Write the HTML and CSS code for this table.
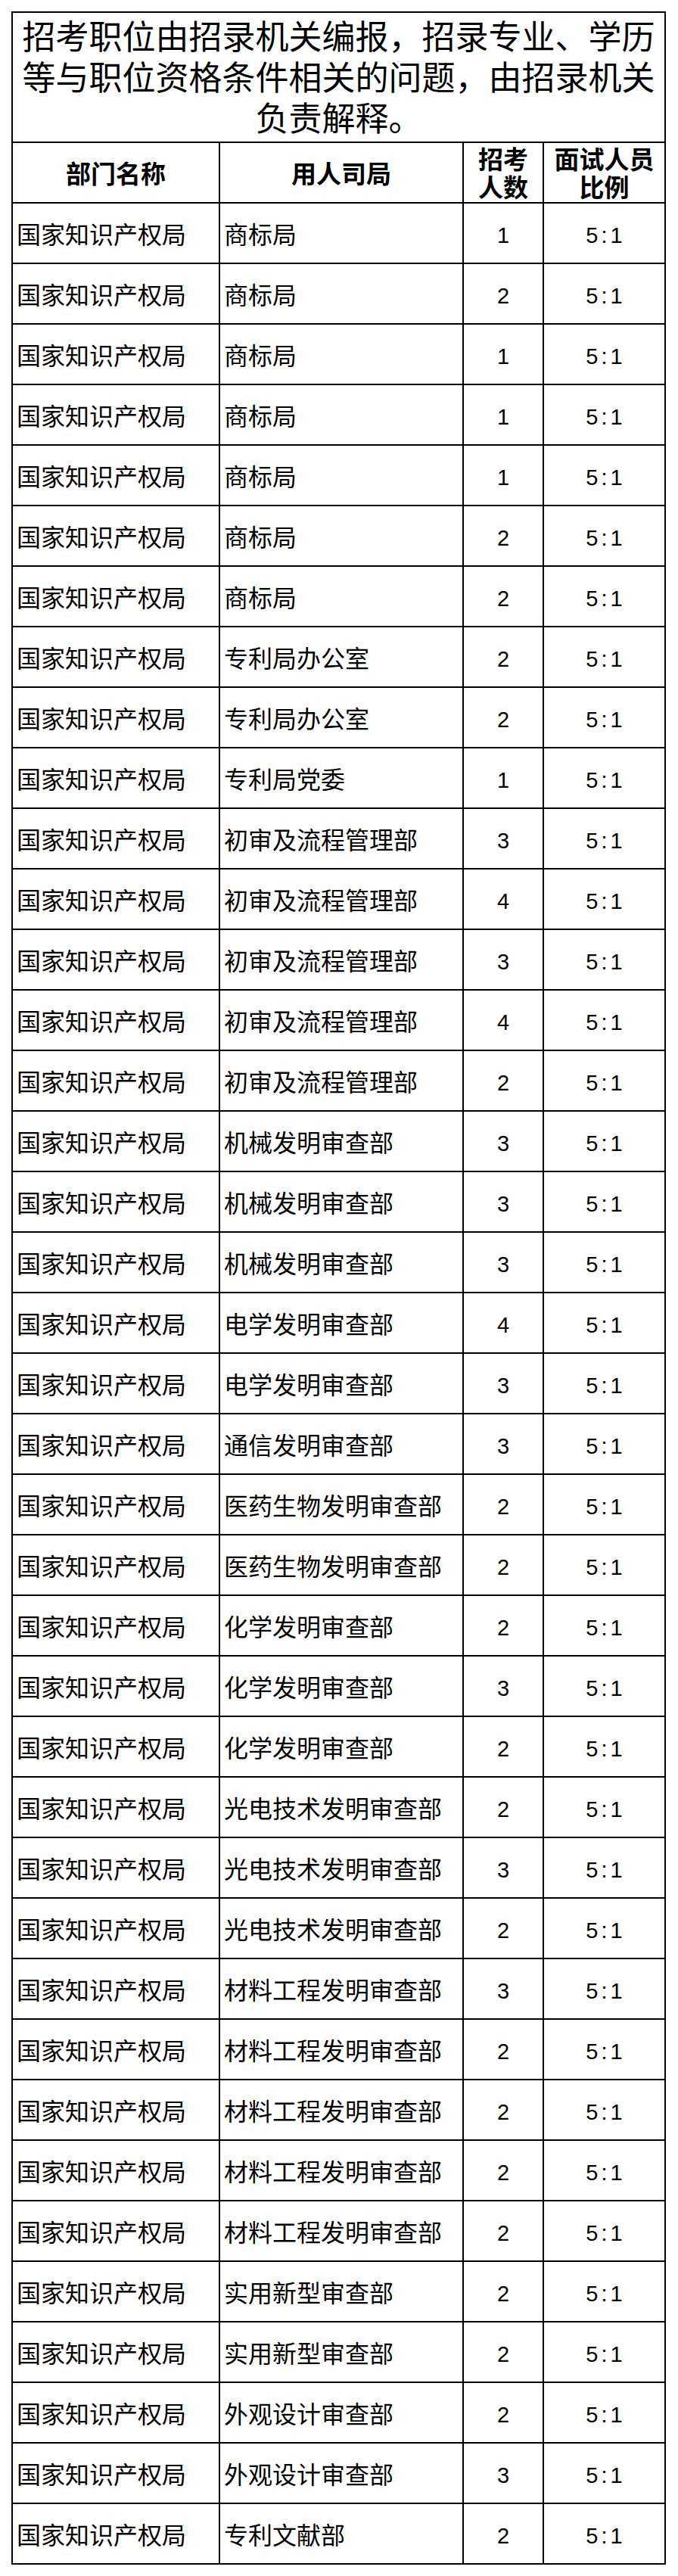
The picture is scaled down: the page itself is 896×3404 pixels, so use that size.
FILE: index.html
```html
<!DOCTYPE html>
<html lang="zh-CN">
<head>
<meta charset="utf-8">
<title>招考职位表</title>
<link rel="stylesheet" href="styles.css">
</head>
<body>
<div class="sheet">
  <div class="title">招考职位由招录机关编报，招录专业、学历等与职位资格条件相关的问题，由招录机关负责解释。</div>
  <div class="row head">
    <div class="cell c">部门名称</div>
    <div class="cell c">用人司局</div>
    <div class="cell c two">招考<br>人数</div>
    <div class="cell c two">面试人员<br>比例</div>
  </div>
  <div class="row"><div class="cell">国家知识产权局</div><div class="cell">商标局</div><div class="cell c num">1</div><div class="cell c num"><span class="ratio">5:1</span></div></div>
  <div class="row"><div class="cell">国家知识产权局</div><div class="cell">商标局</div><div class="cell c num">2</div><div class="cell c num"><span class="ratio">5:1</span></div></div>
  <div class="row"><div class="cell">国家知识产权局</div><div class="cell">商标局</div><div class="cell c num">1</div><div class="cell c num"><span class="ratio">5:1</span></div></div>
  <div class="row"><div class="cell">国家知识产权局</div><div class="cell">商标局</div><div class="cell c num">1</div><div class="cell c num"><span class="ratio">5:1</span></div></div>
  <div class="row"><div class="cell">国家知识产权局</div><div class="cell">商标局</div><div class="cell c num">1</div><div class="cell c num"><span class="ratio">5:1</span></div></div>
  <div class="row"><div class="cell">国家知识产权局</div><div class="cell">商标局</div><div class="cell c num">2</div><div class="cell c num"><span class="ratio">5:1</span></div></div>
  <div class="row"><div class="cell">国家知识产权局</div><div class="cell">商标局</div><div class="cell c num">2</div><div class="cell c num"><span class="ratio">5:1</span></div></div>
  <div class="row"><div class="cell">国家知识产权局</div><div class="cell">专利局办公室</div><div class="cell c num">2</div><div class="cell c num"><span class="ratio">5:1</span></div></div>
  <div class="row"><div class="cell">国家知识产权局</div><div class="cell">专利局办公室</div><div class="cell c num">2</div><div class="cell c num"><span class="ratio">5:1</span></div></div>
  <div class="row"><div class="cell">国家知识产权局</div><div class="cell">专利局党委</div><div class="cell c num">1</div><div class="cell c num"><span class="ratio">5:1</span></div></div>
  <div class="row"><div class="cell">国家知识产权局</div><div class="cell">初审及流程管理部</div><div class="cell c num">3</div><div class="cell c num"><span class="ratio">5:1</span></div></div>
  <div class="row"><div class="cell">国家知识产权局</div><div class="cell">初审及流程管理部</div><div class="cell c num">4</div><div class="cell c num"><span class="ratio">5:1</span></div></div>
  <div class="row"><div class="cell">国家知识产权局</div><div class="cell">初审及流程管理部</div><div class="cell c num">3</div><div class="cell c num"><span class="ratio">5:1</span></div></div>
  <div class="row"><div class="cell">国家知识产权局</div><div class="cell">初审及流程管理部</div><div class="cell c num">4</div><div class="cell c num"><span class="ratio">5:1</span></div></div>
  <div class="row"><div class="cell">国家知识产权局</div><div class="cell">初审及流程管理部</div><div class="cell c num">2</div><div class="cell c num"><span class="ratio">5:1</span></div></div>
  <div class="row"><div class="cell">国家知识产权局</div><div class="cell">机械发明审查部</div><div class="cell c num">3</div><div class="cell c num"><span class="ratio">5:1</span></div></div>
  <div class="row"><div class="cell">国家知识产权局</div><div class="cell">机械发明审查部</div><div class="cell c num">3</div><div class="cell c num"><span class="ratio">5:1</span></div></div>
  <div class="row"><div class="cell">国家知识产权局</div><div class="cell">机械发明审查部</div><div class="cell c num">3</div><div class="cell c num"><span class="ratio">5:1</span></div></div>
  <div class="row"><div class="cell">国家知识产权局</div><div class="cell">电学发明审查部</div><div class="cell c num">4</div><div class="cell c num"><span class="ratio">5:1</span></div></div>
  <div class="row"><div class="cell">国家知识产权局</div><div class="cell">电学发明审查部</div><div class="cell c num">3</div><div class="cell c num"><span class="ratio">5:1</span></div></div>
  <div class="row"><div class="cell">国家知识产权局</div><div class="cell">通信发明审查部</div><div class="cell c num">3</div><div class="cell c num"><span class="ratio">5:1</span></div></div>
  <div class="row"><div class="cell">国家知识产权局</div><div class="cell">医药生物发明审查部</div><div class="cell c num">2</div><div class="cell c num"><span class="ratio">5:1</span></div></div>
  <div class="row"><div class="cell">国家知识产权局</div><div class="cell">医药生物发明审查部</div><div class="cell c num">2</div><div class="cell c num"><span class="ratio">5:1</span></div></div>
  <div class="row"><div class="cell">国家知识产权局</div><div class="cell">化学发明审查部</div><div class="cell c num">2</div><div class="cell c num"><span class="ratio">5:1</span></div></div>
  <div class="row"><div class="cell">国家知识产权局</div><div class="cell">化学发明审查部</div><div class="cell c num">3</div><div class="cell c num"><span class="ratio">5:1</span></div></div>
  <div class="row"><div class="cell">国家知识产权局</div><div class="cell">化学发明审查部</div><div class="cell c num">2</div><div class="cell c num"><span class="ratio">5:1</span></div></div>
  <div class="row"><div class="cell">国家知识产权局</div><div class="cell">光电技术发明审查部</div><div class="cell c num">2</div><div class="cell c num"><span class="ratio">5:1</span></div></div>
  <div class="row"><div class="cell">国家知识产权局</div><div class="cell">光电技术发明审查部</div><div class="cell c num">3</div><div class="cell c num"><span class="ratio">5:1</span></div></div>
  <div class="row"><div class="cell">国家知识产权局</div><div class="cell">光电技术发明审查部</div><div class="cell c num">2</div><div class="cell c num"><span class="ratio">5:1</span></div></div>
  <div class="row"><div class="cell">国家知识产权局</div><div class="cell">材料工程发明审查部</div><div class="cell c num">3</div><div class="cell c num"><span class="ratio">5:1</span></div></div>
  <div class="row"><div class="cell">国家知识产权局</div><div class="cell">材料工程发明审查部</div><div class="cell c num">2</div><div class="cell c num"><span class="ratio">5:1</span></div></div>
  <div class="row"><div class="cell">国家知识产权局</div><div class="cell">材料工程发明审查部</div><div class="cell c num">2</div><div class="cell c num"><span class="ratio">5:1</span></div></div>
  <div class="row"><div class="cell">国家知识产权局</div><div class="cell">材料工程发明审查部</div><div class="cell c num">2</div><div class="cell c num"><span class="ratio">5:1</span></div></div>
  <div class="row"><div class="cell">国家知识产权局</div><div class="cell">材料工程发明审查部</div><div class="cell c num">2</div><div class="cell c num"><span class="ratio">5:1</span></div></div>
  <div class="row"><div class="cell">国家知识产权局</div><div class="cell">实用新型审查部</div><div class="cell c num">2</div><div class="cell c num"><span class="ratio">5:1</span></div></div>
  <div class="row"><div class="cell">国家知识产权局</div><div class="cell">实用新型审查部</div><div class="cell c num">2</div><div class="cell c num"><span class="ratio">5:1</span></div></div>
  <div class="row"><div class="cell">国家知识产权局</div><div class="cell">外观设计审查部</div><div class="cell c num">2</div><div class="cell c num"><span class="ratio">5:1</span></div></div>
  <div class="row"><div class="cell">国家知识产权局</div><div class="cell">外观设计审查部</div><div class="cell c num">3</div><div class="cell c num"><span class="ratio">5:1</span></div></div>
  <div class="row"><div class="cell">国家知识产权局</div><div class="cell">专利文献部</div><div class="cell c num">2</div><div class="cell c num"><span class="ratio">5:1</span></div></div>
</div>
</body>
</html>
```

FILE: styles.css
```css
html, body {
  margin: 0;
  background: #fff;
}

body {
  padding: 15px 16px 15px 15px;
  color: #000;
  font-family: "Noto Sans CJK SC", "Liberation Sans", sans-serif;
}

.sheet {
  width: 865px;
  box-sizing: border-box;
  border-left: 2px solid #000;
  border-top: 2px solid #000;
}

.title {
  height: 172px;
  box-sizing: border-box;
  border-right: 2px solid #000;
  border-bottom: 2px solid #000;
  padding: 6px 4px 0;
  text-align: center;
  font-family: "Liberation Sans", "Noto Sans CJK SC", sans-serif;
  font-size: 44px;
  line-height: 54px;
}

.row {
  display: grid;
  grid-template-columns: 274px 322px 106px 161px;
  height: 80px;
}

.cell {
  box-sizing: border-box;
  border-right: 2px solid #000;
  border-bottom: 2px solid #000;
  display: flex;
  align-items: center;
  padding-left: 5px;
  font-size: 32px;
  line-height: 40px;
  white-space: nowrap;
}

.cell.c {
  justify-content: center;
  text-align: center;
  padding-left: 0;
}

.head .cell {
  font-size: 33px;
  font-weight: bold;
}

.head .cell.two {
  font-family: "Liberation Sans", "Noto Sans CJK SC", sans-serif;
  line-height: 37px;
  padding-top: 4px;
}

.num {
  font-family: "Liberation Sans", Arial, sans-serif;
  font-size: 29px;
  padding-top: 5px;
}

.ratio {
  letter-spacing: 4px;
  margin-right: -4px;
}
```
